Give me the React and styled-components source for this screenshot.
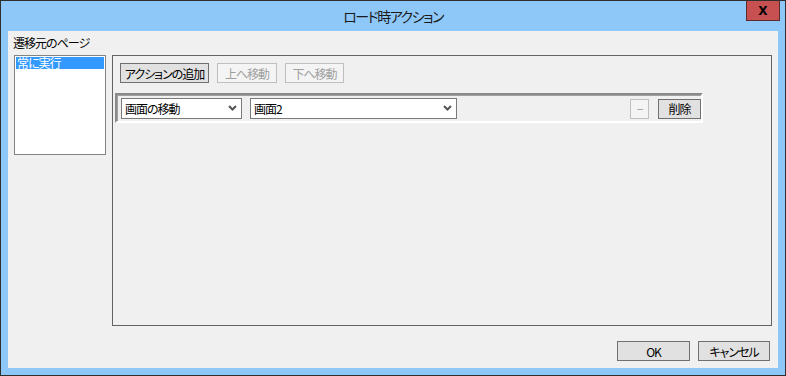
import React from "react";
import styled, { createGlobalStyle } from "styled-components";

const Global = createGlobalStyle`
  html, body { margin: 0; padding: 0; background: #ffffff; }
  body {
    font-family: "Noto Sans CJK JP", "Noto Sans", sans-serif;
    font-size: 12px;
    letter-spacing: -1px;
    font-feature-settings: "palt";
  }
  * { box-sizing: border-box; }
`;

const Window = styled.div`
  width: 786px;
  height: 376px;
  border: 1px solid #2f2f2f;
  background: #8ec8f9;
  display: flex;
  flex-direction: column;
`;

const TitleBar = styled.div`
  height: 30px;
  display: grid;
  grid-template-columns: 1fr auto 1fr;
  align-items: start;
`;

const Title = styled.div`
  grid-column: 2;
  height: 30px;
  line-height: 30px;
  font-size: 14px;
  letter-spacing: -1.5px;
  color: #1b1b1b;
`;

const CloseButton = styled.div`
  grid-column: 3;
  justify-self: end;
  margin-right: 5px;
  width: 34px;
  height: 20px;
  background: #c75050;
  border: 1px solid #5b2b2b;
  border-top: none;
  display: flex;
  align-items: center;
  justify-content: center;
  font-family: "DejaVu Sans", sans-serif;
  font-weight: bold;
  font-size: 12px;
  letter-spacing: 0;
  color: #000;
`;

const Client = styled.div`
  margin: 0 7px;
  height: 337px;
  background: #f0f0f0;
  display: flex;
  flex-direction: column;
`;

const GroupLabel = styled.div`
  margin: 4px 0 0 5px;
  height: 20px;
  line-height: 16px;
  color: #000;
`;

const Body = styled.div`
  display: flex;
  align-items: flex-start;
  gap: 6px;
  margin-left: 6px;
`;

const ListBox = styled.div`
  width: 92px;
  height: 100px;
  background: #fff;
  border: 1px solid #828282;
  padding: 1px;
`;

const ListItem = styled.div`
  height: 12px;
  line-height: 12px;
  padding-left: 1px;
  background: ${(p) => (p.$selected ? "#3399ff" : "transparent")};
  color: ${(p) => (p.$selected ? "#fff" : "#000")};
`;

const Panel = styled.div`
  width: 660px;
  height: 271px;
  border: 1px solid #646464;
  display: flex;
  flex-direction: column;
`;

const Toolbar = styled.div`
  display: flex;
  gap: 8px;
  padding: 7px 0 0 7px;
`;

const Button = styled.div`
  width: ${(p) => p.$w}px;
  height: 20px;
  display: flex;
  align-items: center;
  justify-content: center;
  border: 1px solid ${(p) => (p.$disabled ? "#bfbfbf" : "#707070")};
  background: ${(p) => (p.$disabled ? "#f4f4f4" : "#e1e1e1")};
  color: ${(p) => (p.$disabled ? "#a0a0a0" : "#000")};
  white-space: nowrap;
  flex-shrink: 0;
`;

const ActionRow = styled.div`
  margin: 10px 0 0 2px;
  width: 588px;
  height: 30px;
  border-top: 2px solid #8a8a8a;
  border-left: 2px solid #8a8a8a;
  border-right: 2px solid #ffffff;
  border-bottom: 2px solid #ffffff;
  box-shadow: inset 1px 1px 0 #a0a0a0;
  display: flex;
  align-items: center;
  padding: 0 0 0 4px;
`;

const Select = styled.div`
  width: ${(p) => p.$w}px;
  height: 21px;
  background: #fff;
  border: 1px solid #7a7a7a;
  display: flex;
  align-items: center;
  justify-content: space-between;
  padding: 0 4px 0 3px;
  margin-right: ${(p) => p.$mr || 0}px;
  color: #000;
  flex-shrink: 0;
`;

const Spacer = styled.div`
  flex: 1;
`;

const RowButtons = styled.div`
  display: flex;
  gap: 9px;
  margin-top: 1px;
`;

const Footer = styled.div`
  display: flex;
  justify-content: flex-end;
  gap: 8px;
  margin: 15px 8px 0 0;
`;

const Chevron = () => (
  <svg width="9" height="6" viewBox="0 0 9 6">
    <path d="M1 1 L4.5 4.5 L8 1" fill="none" stroke="#555" strokeWidth="2" />
  </svg>
);

export default function App() {
  return (
    <>
      <Global />
      <Window>
        <TitleBar>
          <Title>ロード時アクション</Title>
          <CloseButton>X</CloseButton>
        </TitleBar>
        <Client>
          <GroupLabel>遷移元のページ</GroupLabel>
          <Body>
            <ListBox>
              <ListItem $selected>常に実行</ListItem>
            </ListBox>
            <Panel>
              <Toolbar>
                <Button $w={89}>アクションの追加</Button>
                <Button $w={60} $disabled>上へ移動</Button>
                <Button $w={59} $disabled>下へ移動</Button>
              </Toolbar>
              <ActionRow>
                <Select $w={121} $mr={8}>
                  <span>画面の移動</span>
                  <Chevron />
                </Select>
                <Select $w={207}>
                  <span>画面2</span>
                  <Chevron />
                </Select>
                <Spacer />
                <RowButtons>
                  <Button $w={19} $disabled>−</Button>
                  <Button $w={43}>削除</Button>
                </RowButtons>
              </ActionRow>
            </Panel>
          </Body>
          <Footer>
            <Button $w={73}>OK</Button>
            <Button $w={72}>キャンセル</Button>
          </Footer>
        </Client>
      </Window>
    </>
  );
}
